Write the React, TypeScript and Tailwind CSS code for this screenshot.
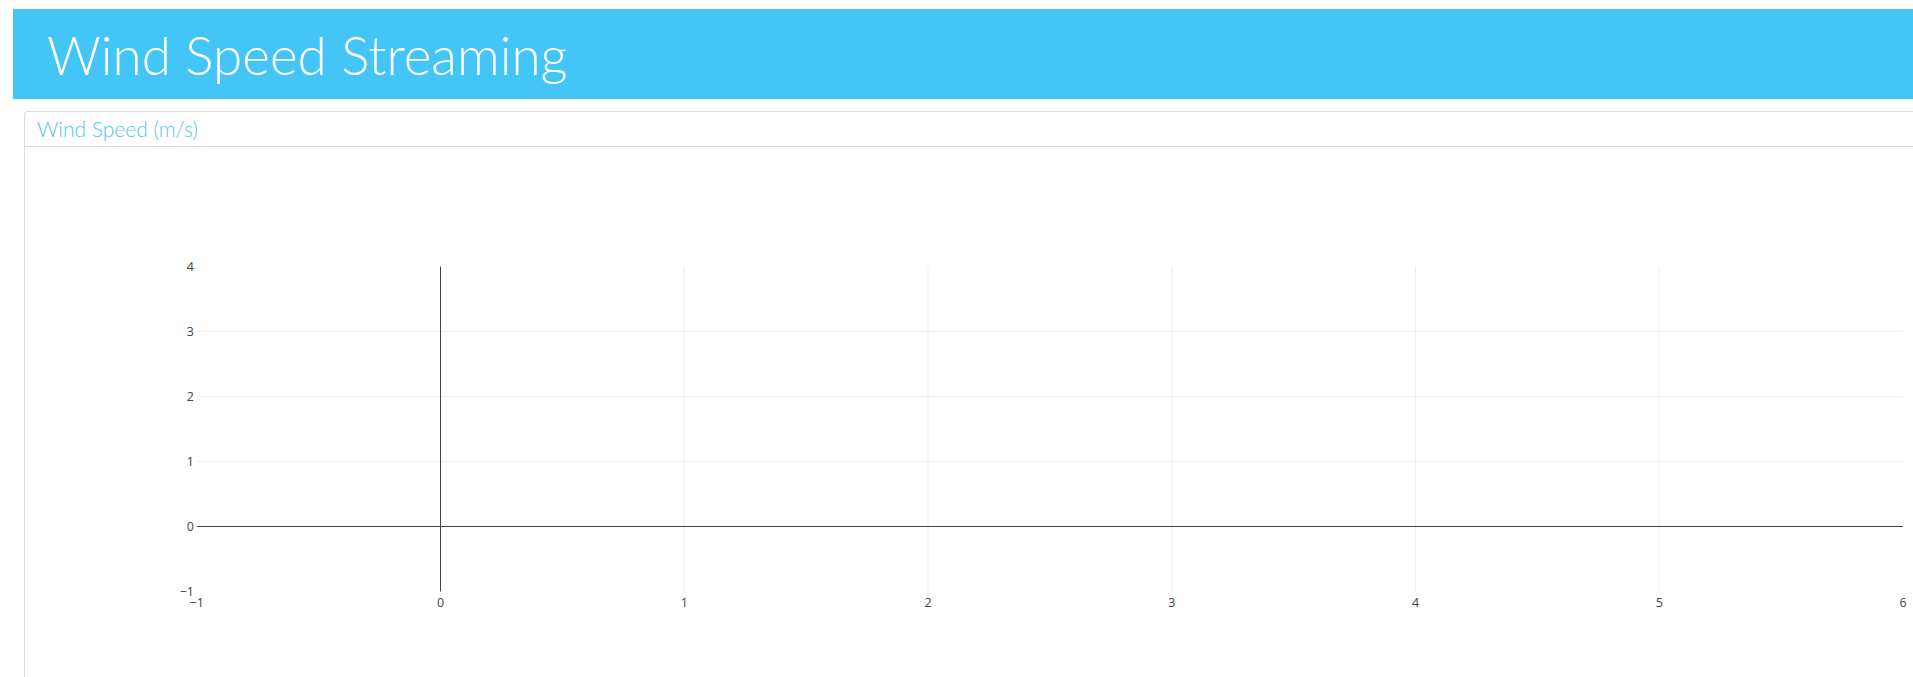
const xs = [-1, 0, 1, 2, 3, 4, 5, 6];
const ys = [-1, 0, 1, 2, 3, 4];

// plot coords relative to the panel body
const px = (v: number) => 415.5 + 243.75 * v;
const py = (v: number) => 379.5 - 65 * v;

const fmt = (v: number) => (v < 0 ? `\u2212${Math.abs(v)}` : `${v}`);

const WindChart = () => (
  <svg width={1900} height={530} className="block" style={{ fontFamily: '"Open Sans", verdana, arial, sans-serif' }}>
    {/* grid */}
    {[1, 2, 3, 4, 5].map((v) => (
      <line key={`gx${v}`} x1={px(v)} x2={px(v)} y1={py(4)} y2={py(-1)} stroke="#eee" strokeWidth={1} />
    ))}
    {[1, 2, 3].map((v) => (
      <line key={`gy${v}`} x1={px(-1)} x2={px(6)} y1={py(v)} y2={py(v)} stroke="#eee" strokeWidth={1} />
    ))}
    {/* zero lines */}
    <line x1={px(-1)} x2={px(6)} y1={py(0)} y2={py(0)} stroke="#444" strokeWidth={1} />
    <line x1={px(0)} x2={px(0)} y1={py(4)} y2={py(-1)} stroke="#444" strokeWidth={1} />
    {/* tick labels */}
    {ys.map((v) => (
      <text key={`ly${v}`} x={169} y={py(v) + 4.4} textAnchor="end" fontSize={12.5} fill="#444">
        {fmt(v)}
      </text>
    ))}
    {xs.map((v) => (
      <text key={`lx${v}`} x={px(v)} y={460} textAnchor="middle" fontSize={12.5} fill="#444">
        {fmt(v)}
      </text>
    ))}
  </svg>
);

export default function App() {
  return (
    <div className="h-[677px] overflow-hidden bg-white pt-[9px] flex flex-col">
      {/* Banner */}
      <div className="ml-[13px] h-[90px] shrink-0 bg-[#44c5f7] flex items-center pl-[34px]">
        <h1 className="text-white text-[53px] font-light leading-none font-['Lato',sans-serif]">
          Wind Speed Streaming
        </h1>
      </div>

      {/* Panel */}
      <div className="ml-[24px] -mr-5 mt-[12px] flex-1 border border-b-0 border-[#ddd] rounded-t-[4px] flex flex-col">
        <div className="h-[35px] shrink-0 border-b border-[#ddd] px-[12px] flex items-center">
          <span className="text-[21px] font-light text-[#56c3f5] font-['Lato',sans-serif]">Wind Speed (m/s)</span>
        </div>
        <div className="flex-1">
          <WindChart />
        </div>
      </div>
    </div>
  );
}
